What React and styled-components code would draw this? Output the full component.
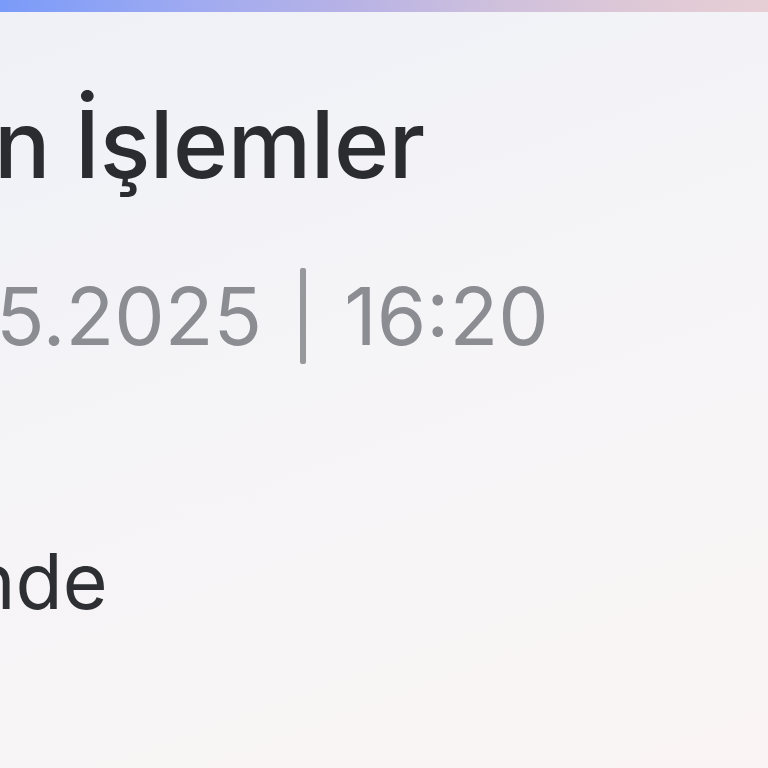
import styled, { createGlobalStyle } from 'styled-components';

const GlobalStyle = createGlobalStyle`
  html, body {
    margin: 0;
    padding: 0;
    overflow: hidden;
  }
  body {
    font-family: Inter, "Noto Sans", "Liberation Sans", sans-serif;
  }
`;

const Screen = styled.div`
  width: 768px;
  height: 768px;
  overflow: hidden;
  display: flex;
  flex-direction: column;
  background: linear-gradient(160deg, #eff1f7 0%, #f5f4f7 45%, #faf5f4 100%);
`;

const AccentBar = styled.div`
  height: 12px;
  flex-shrink: 0;
  background: linear-gradient(90deg, #7a9bf9 0%, #9faaf1 25%, #b7b2e6 45%, #cfc0dc 65%, #dfc9d6 85%, #e6cfd5 100%);
`;

const Content = styled.div`
  display: flex;
  flex-direction: column;
`;

const Title = styled.h1`
  margin: 81px 0 0 ${(p) => p.$shift}px;
  font-size: 94px;
  font-weight: 500;
  line-height: 1.1;
  letter-spacing: -0.5px;
  color: #2b2c30;
  white-space: nowrap;
`;

const Meta = styled.div`
  margin: 72px 0 0 ${(p) => p.$shift}px;
  display: flex;
  align-items: center;
  font-size: 80px;
  font-weight: 400;
  line-height: 1;
  color: #8c8d92;
  white-space: nowrap;
`;

const Divider = styled.span`
  width: 6px;
  height: 96px;
  margin: 0 38px 0 38px;
  background: #97989c;
  border-radius: 2px;
  transform: translateY(0px);
`;

const Status = styled.p`
  margin: 179px 0 0 ${(p) => p.$shift}px;
  font-size: 77px;
  font-weight: 400;
  line-height: 1;
  color: #2e2f33;
  white-space: nowrap;
`;

export default function App() {
  return (
    <>
      <GlobalStyle />
      <Screen>
        <AccentBar />
        <Content>
          <Title $shift={-6}>n İşlemler</Title>
          <Meta $shift={-4}>
            <span>5.2025</span>
            <Divider />
            <span>16:20</span>
          </Meta>
          <Status $shift={-30}>nde</Status>
        </Content>
      </Screen>
    </>
  );
}
